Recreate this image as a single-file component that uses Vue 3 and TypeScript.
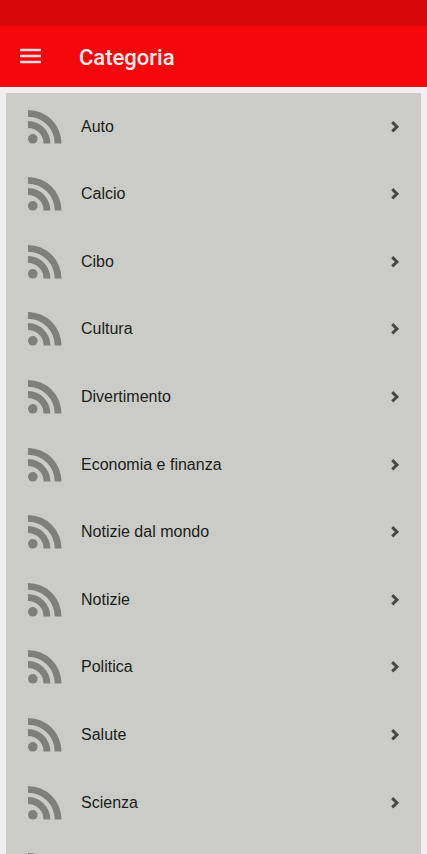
<script setup lang="ts">
const categories: string[] = [
  'Auto',
  'Calcio',
  'Cibo',
  'Cultura',
  'Divertimento',
  'Economia e finanza',
  'Notizie dal mondo',
  'Notizie',
  'Politica',
  'Salute',
  'Scienza',
  'Sport',
]
</script>

<template>
  <div class="screen">
    <header class="header">
      <div class="status"></div>
      <div class="toolbar">
        <button class="menu" type="button" aria-label="Menu">
          <svg viewBox="0 0 21 16" width="21" height="16" aria-hidden="true">
            <path d="M0 2H21M0 8H21M0 14H21" stroke="#ffdcdc" stroke-width="2.6" />
          </svg>
        </button>
        <h1 class="title">Categoria</h1>
      </div>
    </header>
    <main class="content">
      <ul class="list">
        <li v-for="name in categories" :key="name" class="item">
          <a class="row" href="#">
            <svg class="feed" viewBox="0 0 34 34" width="34" height="34" aria-hidden="true">
              <circle cx="4.8" cy="28.8" r="4.8" />
              <path d="M0 11.1A22.4 22.4 0 0 1 22.4 33.5H15.5A15.5 15.5 0 0 0 0 18Z" />
              <path d="M0 0A33.5 33.5 0 0 1 33.5 33.5H26.7A26.7 26.7 0 0 0 0 6.8Z" />
            </svg>
            <span class="name">{{ name }}</span>
            <svg class="chevron" viewBox="0 0 8 12" width="8" height="12" aria-hidden="true">
              <path d="M1.2 1.2L6 5.8L1.2 10.4" />
            </svg>
          </a>
        </li>
      </ul>
    </main>
  </div>
</template>

<style>
body {
  margin: 0;
  background: #f0eef0;
}
</style>

<style scoped>
.screen {
  display: flex;
  flex-direction: column;
  height: 100vh;
  font-family: "Liberation Sans", Arial, sans-serif;
}
.header {
  flex: none;
  background: #f4080b;
}
.status {
  height: 26px;
  background: #d70809;
}
.toolbar {
  display: flex;
  align-items: center;
  gap: 38px;
  height: 60px;
  padding: 0 20px;
  border-bottom: 1px solid #d61410;
}
.menu {
  display: flex;
  padding: 0;
  border: 0;
  background: none;
  cursor: pointer;
}
.title {
  margin: 0;
  padding-top: 4px;
  font: 500 22px/26px Roboto, sans-serif;
  color: #ffeceb;
}
.content {
  flex: 1;
  min-height: 0;
  padding: 6px;
  overflow-y: auto;
  scrollbar-width: none;
}
.list {
  display: grid;
  grid-auto-rows: 67px 68px 67px 68px 68px;
  margin: 0;
  padding: 0;
  list-style: none;
  background: #cbccc7;
}
.item {
  display: grid;
}
.row {
  display: flex;
  align-items: center;
  padding: 0 22px;
  color: #1b1c1a;
  text-decoration: none;
}
.feed {
  flex: none;
  fill: #7f7f7d;
}
.name {
  flex: 1;
  padding-left: 19px;
  font-size: 16px;
  line-height: 20px;
}
.chevron {
  flex: none;
  fill: none;
  stroke: #484946;
  stroke-width: 3;
}
</style>
